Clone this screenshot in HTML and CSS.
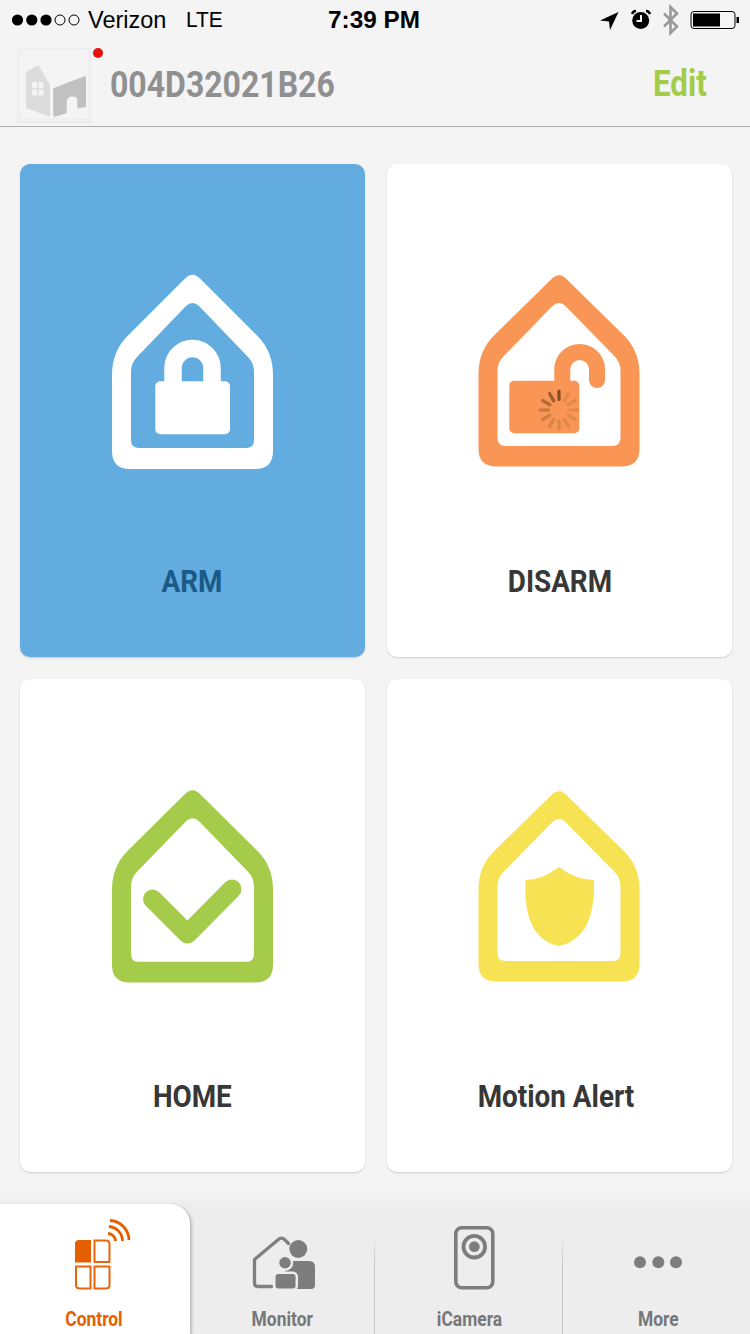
FILE: index.html
```html
<!DOCTYPE html>
<html lang="en">
<head>
<meta charset="utf-8">
<title>Control</title>
<link rel="stylesheet" href="styles.css">
</head>
<body>
<svg class="defs" width="0" height="0" aria-hidden="true">
  <defs>
    <path id="house" fill-rule="evenodd" d="M184 279.500Q192.500 270 201 279.500L258 336.500Q273 352 273 375L273 451Q273 469 255 469L130 469Q112 469 112 451L112 375Q112 352 127 336.500ZM186 306L137 357Q131 363 131 372L131 440Q131 448 139 448L246 448Q254 448 254 440L254 372Q254 363 248 357L199 306Q192.500 300 186 306Z"/>
  </defs>
</svg>
<div class="app">
  <header class="top">
    <div class="status">
      <div class="status-left">
        <svg class="signal" viewBox="12 10 70 20" width="70" height="20">
          <circle cx="17.500" cy="20" r="5.600"/><circle cx="31.800" cy="20" r="5.600"/><circle cx="46" cy="20" r="5.600"/>
          <circle class="hollow" cx="60" cy="20" r="5"/><circle class="hollow" cx="74" cy="20" r="5"/>
        </svg>
        <span class="carrier">Verizon</span>
        <span class="network">LTE</span>
      </div>
      <div class="clock">7:39 PM</div>
      <div class="status-right">
        <svg viewBox="595 4 150 32" width="150" height="32">
          <path d="M618.500 12L600 20.500L609 21.500L610 30Z"/>
          <circle cx="640.700" cy="20.500" r="8.500"/>
          <path class="clock-hand" d="M641 15V21H636.500"/>
          <path class="bell" d="M632 14Q633 11 636 11M646 11Q649 11 650 14"/>
          <path class="bt" d="M664 13.500L677 26.500L670.500 33V7L677 13.500L664 26.500"/>
          <rect class="batt" x="691" y="11.500" width="44" height="17" rx="3"/>
          <rect x="693" y="13.500" width="27" height="13"/>
          <path d="M736.500 17H739V23H736.500Z"/>
        </svg>
      </div>
    </div>
    <div class="nav">
      <div class="thumb">
        <svg viewBox="17 47 75 75" width="75" height="75">
          <rect class="thumb-in" x="20" y="50" width="68" height="68" rx="3"/>
          <path class="thumb-l" d="M26 72L38.300 65L50 85V116.700L26 108Z"/>
          <path class="thumb-d" fill-rule="evenodd" d="M53.300 88.300L85 76Q86 76 86 77V107L77.300 108.500V100Q77.300 96 72 96.500Q66.700 97 66.700 102V113L55 116.700Q53.300 117 53.300 115Z"/>
          <path class="thumb-w" d="M32 82H37V88H32ZM38.500 82H43.500V88H38.500ZM32 89.500H37V95.500H32ZM38.500 89.500H43.500V95.500H38.500Z"/>
        </svg>
        <span class="dot"></span>
      </div>
      <div class="device">004D32021B26</div>
      <div class="edit">Edit</div>
    </div>
  </header>

  <main class="grid">
    <section class="card card-on">
      <svg class="ico" viewBox="107 270 171 205" width="171" height="205">
        <use href="#house" class="f-white"/>
        <path class="s-white shackle" d="M173 385V368A19.500 19.500 0 0 1 212 368V385"/>
        <rect class="f-white" x="155.300" y="381.300" width="74.700" height="53" rx="5"/>
      </svg>
      <div class="label label-on">ARM</div>
    </section>
    <section class="card">
      <svg class="ico" viewBox="107 270 171 205" width="171" height="205">
        <use href="#house" class="f-orange" transform="translate(-.5 4.600) scale(1 .985)"/>
        <path class="s-orange shackle2" d="M195.300 385V368A17.400 17.400 0 0 1 230 368V380"/>
        <rect class="f-orange" x="142.300" y="380.700" width="70" height="52.600" rx="5"/>
        <g class="spin">
          <line x1="192" y1="391" x2="192" y2="399.500" opacity=".95"/>
          <line x1="192" y1="391" x2="192" y2="399.500" opacity=".16" transform="rotate(30 192 410)"/>
          <line x1="192" y1="391" x2="192" y2="399.500" opacity=".16" transform="rotate(60 192 410)"/>
          <line x1="192" y1="391" x2="192" y2="399.500" opacity=".16" transform="rotate(90 192 410)"/>
          <line x1="192" y1="391" x2="192" y2="399.500" opacity=".18" transform="rotate(120 192 410)"/>
          <line x1="192" y1="391" x2="192" y2="399.500" opacity=".2" transform="rotate(150 192 410)"/>
          <line x1="192" y1="391" x2="192" y2="399.500" opacity=".22" transform="rotate(180 192 410)"/>
          <line x1="192" y1="391" x2="192" y2="399.500" opacity=".25" transform="rotate(210 192 410)"/>
          <line x1="192" y1="391" x2="192" y2="399.500" opacity=".3" transform="rotate(240 192 410)"/>
          <line x1="192" y1="391" x2="192" y2="399.500" opacity=".4" transform="rotate(270 192 410)"/>
          <line x1="192" y1="391" x2="192" y2="399.500" opacity=".55" transform="rotate(300 192 410)"/>
          <line x1="192" y1="391" x2="192" y2="399.500" opacity=".75" transform="rotate(330 192 410)"/>
        </g>
      </svg>
      <div class="label">DISARM</div>
    </section>
    <section class="card">
      <svg class="ico" viewBox="107 270 171 205" width="171" height="205">
        <use href="#house" class="f-green" transform="translate(0 3.300) scale(1 .99)"/>
        <path class="s-green check" d="M152.500 384L187.500 419L232 374"/>
      </svg>
      <div class="label">HOME</div>
    </section>
    <section class="card">
      <svg class="ico" viewBox="107 270 171 205" width="171" height="205">
        <use href="#house" class="f-yellow" transform="translate(-.5 7) scale(1 .98)"/>
        <path class="f-yellow" d="M192 352Q175 365 158.500 365C157 400 165 425 192 431C219 425 228 400 227 365Q209 365 192 352Z"/>
      </svg>
      <div class="label label-motion">Motion Alert</div>
    </section>
  </main>

  <nav class="tabs">
    <div class="tab tab-on tab-1">
      <svg viewBox="0 1204 190 90" width="190" height="90">
        <path class="o-fill" d="M91 1240V1262.500H75V1244Q75 1240 79 1240Z"/>
        <path class="o-line" d="M94.500 1240.500H106Q109.500 1240.500 109.500 1244V1262H94.500ZM76 1266.500H90.500V1288.500H80Q76 1288.500 76 1285ZM94.500 1266.500H109.500V1285Q109.500 1288.500 106 1288.500H94.500Z"/>
        <path class="o-arc" d="M108 1233.500A8 8 0 0 1 115.500 1241M109 1226.500A14.500 14.500 0 0 1 122.500 1241M110 1220.500A20 20 0 0 1 129 1240"/>
      </svg>
      <span class="tab-label tab-label-on">Control</span>
    </div>
    <div class="tab tab-2">
      <svg viewBox="190 1204 184 90" width="184" height="90">
        <path class="g-line" d="M271.500 1286.500H258Q254.500 1286.500 254.500 1283V1259.500L279 1239Q282 1237 284.500 1239.500L288.500 1243.500"/>
        <circle class="g-fill" cx="298.300" cy="1249" r="9"/>
        <path class="g-fill" d="M291 1261H309Q315 1261 315 1267V1285Q315 1289 311 1289H285V1262Z"/>
        <circle class="g-fill halo" cx="285" cy="1262.700" r="7"/>
        <rect class="g-fill halo" x="274.300" y="1272.700" width="22.500" height="17" rx="4"/>
      </svg>
      <span class="tab-label">Monitor</span>
    </div>
    <div class="tab tab-3">
      <svg viewBox="374 1204 188 90" width="188" height="90">
        <rect class="g-cam" x="455.800" y="1227.800" width="37" height="60" rx="6"/>
        <circle class="g-ring" cx="474.300" cy="1246.700" r="10.800"/>
        <circle class="g-fill" cx="474.300" cy="1246.700" r="5.400"/>
      </svg>
      <span class="tab-label tab-label-cam">iCamera</span>
    </div>
    <div class="tab tab-4">
      <svg viewBox="562 1204 188 90" width="188" height="90">
        <circle class="g-fill" cx="640" cy="1262.300" r="6"/>
        <circle class="g-fill" cx="658.300" cy="1262.300" r="6"/>
        <circle class="g-fill" cx="676" cy="1262.300" r="6"/>
      </svg>
      <span class="tab-label tab-label-more">More</span>
    </div>
  </nav>
</div>
</body>
</html>
```
FILE: styles.css
```css
* { box-sizing: border-box; }
html, body { margin: 0; padding: 0; }
body { width: 750px; height: 1334px; overflow: hidden; background: #f4f4f4; font-family: "Liberation Sans", Arial, sans-serif; }
.defs { position: absolute; }
svg { display: block; }
.app { width: 750px; height: 1334px; display: flex; flex-direction: column; }

/* header */
.top { height: 127px; border-bottom: 1px solid #aaa; flex: none; }
.status { height: 40px; display: flex; align-items: center; color: #000; }
.status-left { flex: 1; display: flex; align-items: center; padding-left: 5px; font-size: 23.500px; }
.signal { fill: #000; margin-left: 7px; }
.hollow { fill: none; stroke: #000; stroke-width: 1; }
.carrier { margin-left: 6px; }
.network { margin-left: 20px; font-size: 22px; transform: scaleX(.95); transform-origin: left; }
.clock { font-size: 24.300px; font-weight: 700; margin-right: 2px; }
.status-right { flex: 1; display: flex; justify-content: flex-end; padding-right: 5px; }
.clock-hand { fill: none; stroke: #f4f4f4; stroke-width: 2; }
.bell { fill: none; stroke: #000; stroke-width: 2.400; }
.bt { fill: none; stroke: #9a9a9a; stroke-width: 2.600; }
.batt { fill: none; stroke: #000; stroke-width: 1; }

.nav { height: 86px; display: flex; align-items: center; padding: 0 43px 0 17px; }
.thumb { position: relative; width: 75px; height: 75px; margin-top: 3px; background: #efefef; border-radius: 3px; box-shadow: 0 1px 1px rgba(0,0,0,.06); flex: none; }
.thumb-in { fill: #f4f4f4; }
.thumb-l { fill: #dcdcdc; }
.thumb-d { fill: #c1c1c1; }
.thumb-w { fill: #f4f4f4; }
.dot { position: absolute; left: 76px; top: 1px; width: 10px; height: 10px; border-radius: 50%; background: #e8120c; }
.device { margin-left: 18px; flex: 1; font-family: Roboto, sans-serif; font-weight: 700; font-size: 37px; color: #909090; margin-top: 2px; transform: scaleX(.865); transform-origin: left; }
.edit { font-family: Roboto, sans-serif; font-weight: 700; font-size: 36px; color: #a4cb4a; margin-top: 2px; transform: scaleX(.87); transform-origin: right; }

/* cards */
.grid { flex: 1; display: grid; grid-template-columns: 345px 345px; grid-template-rows: 493px 493px; gap: 22px; padding: 37px 0 0 20px; }
.card { background: #fff; border-radius: 10px; box-shadow: 0 1px 2px rgba(0,0,0,.16); display: flex; flex-direction: column; align-items: center; padding-top: 106px; }
.card-on { background: #62acdf; }
.ico { flex: none; }
.label { margin-top: 88px; font-family: Roboto, sans-serif; font-weight: 700; font-size: 32px; line-height: 36px; color: #373737; transform: scaleX(.87); }
.label-on { color: #1a5a87; }
.label-motion { margin-left: -7px; }
.f-white { fill: #fff; }
.f-orange { fill: #f99655; }
.f-green { fill: #a4cb4a; }
.f-yellow { fill: #f7e254; }
.s-white, .s-orange, .s-green { fill: none; stroke-linecap: round; stroke-linejoin: round; }
.s-white { stroke: #fff; }
.s-orange { stroke: #f99655; }
.s-green { stroke: #a4cb4a; }
.shackle { stroke-width: 17.500; }
.shackle2 { stroke-width: 16; }
.check { stroke-width: 19; }
.spin { stroke: #7a4a22; stroke-width: 3.200; stroke-linecap: round; }

/* tabs */
.tabs { height: 144px; flex: none; display: flex; padding-top: 14px; background: linear-gradient(#f4f4f4 0, #ededed 16px, #ededed 100%); }
.tab { display: flex; flex-direction: column; align-items: center; position: relative; height: 130px; }
.tab-1 { width: 190px; }
.tab-2 { width: 184px; }
.tab-3 { width: 188px; }
.tab-4 { width: 188px; }
.tab-on { background: #fff; border-radius: 0 20px 0 0; box-shadow: 2px 1px 3px rgba(0,0,0,.22); }
.tab-3::before, .tab-4::before { content: ""; position: absolute; left: 0; top: 30px; bottom: 0; width: 1px; background: linear-gradient(rgba(190,190,190,0), #c6c6c6 30%); }
.tab-label { margin-top: 13px; font-family: Roboto, sans-serif; font-weight: 700; font-size: 20px; line-height: 24px; color: #777; transform: scaleX(.87); }
.tab-label-on { color: #e35f00; margin-left: -2px; }
.tab-label-cam { margin-left: 3px; }
.tab-label-more { margin-left: 4px; }
.o-fill { fill: #e35f00; }
.o-line { fill: none; stroke: #e8650c; stroke-width: 2; }
.o-arc { fill: none; stroke: #e35f00; stroke-width: 2.800; }
.g-fill { fill: #7d7d7d; }
.g-line { fill: none; stroke: #808080; stroke-width: 3.300; stroke-linejoin: round; stroke-linecap: round; }
.halo { stroke: #ededed; stroke-width: 2.500; }
.g-cam { fill: none; stroke: #7d7d7d; stroke-width: 3.600; }
.g-ring { fill: none; stroke: #7d7d7d; stroke-width: 3.800; }
```
